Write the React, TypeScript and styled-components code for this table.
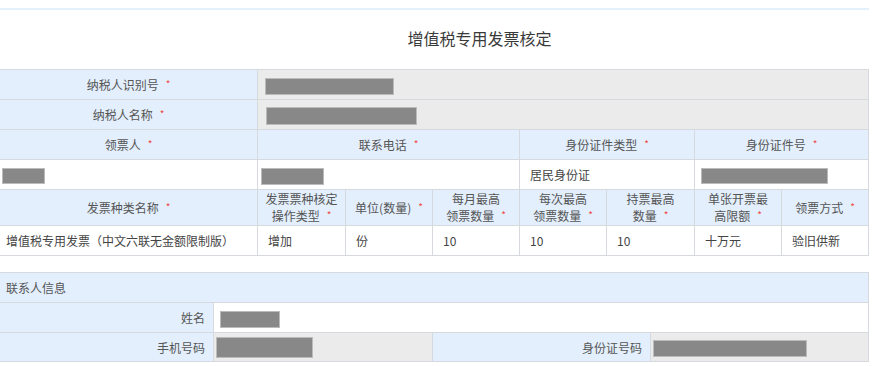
import React from "react"
import styled, { createGlobalStyle } from "styled-components"

const GlobalStyle = createGlobalStyle`
  html, body {
    margin: 0;
    padding: 0;
    background: #fff;
  }
  body {
    font-family: "Noto Sans CJK SC", "Liberation Sans", sans-serif;
    font-size: 12px;
    color: #555;
  }
`

const Page = styled.div`
  width: 875px;
  padding-top: 8px;
`

const TopLine = styled.div`
  height: 2px;
  background: #e3f1fc;
  margin-right: 6px;
`

const Title = styled.h2`
  margin: 0;
  height: 59px;
  line-height: 56px;
  text-align: center;
  font-size: 16px;
  font-weight: normal;
  color: #3a3a3a;
  padding-left: 84px;
`

const Table = styled.table<{ $gap?: number }>`
  width: 869px;
  table-layout: fixed;
  border-collapse: collapse;
  margin-top: ${p => p.$gap || 0}px;
  margin-left: -1px;
`

const Row = styled.tr<{ $h?: number }>`
  height: ${p => p.$h || 30}px;
`

const Label = styled.td<{ $align?: string }>`
  background: #e3effd;
  border: 1px solid #d6dadf;
  text-align: ${p => p.$align || "center"};
  padding: ${p => (p.$align === "right" ? "0 8px 0 6px" : "0 4px")};
  color: #555;
  line-height: 17px;
  vertical-align: middle;
`

const Cell = styled.td<{ $grey?: boolean; $pad?: number }>`
  background: ${p => (p.$grey ? "#ebebeb" : "#fff")};
  border: 1px solid #d6dadf;
  padding: 0 4px 0 ${p => (p.$pad === undefined ? 10 : p.$pad)}px;
  color: #444;
  vertical-align: middle;
  white-space: nowrap;
`

const Star = styled.span`
  color: #f04848;
  font-size: 10px;
  margin-left: 7px;
  position: relative;
  top: -2px;
`

const Redact = styled.span<{ $w: number; $h?: number }>`
  display: inline-block;
  vertical-align: middle;
  width: ${p => p.$w}px;
  height: ${p => p.$h || 15}px;
  background: #888;
  box-shadow: 0 0 0 1px #bbb;
`

const Section = styled.td`
  background: #e3effd;
  border: 1px solid #d6dadf;
  padding: 0 6px;
  color: #555;
`

const Req = ({ children }: { children: React.ReactNode }) => (
  <>
    {children}
    <Star>*</Star>
  </>
)

export default function App() {
  return (
    <Page>
      <GlobalStyle />
      <TopLine />
      <Title>增值税专用发票核定</Title>
      <Table>
        <colgroup>
          <col style={{ width: 258 }} />
          <col style={{ width: 88 }} />
          <col style={{ width: 87 }} />
          <col style={{ width: 87 }} />
          <col style={{ width: 87 }} />
          <col style={{ width: 88 }} />
          <col style={{ width: 87 }} />
          <col style={{ width: 87 }} />
        </colgroup>
        <tbody>
          <Row>
            <Label>
              <Req>纳税人识别号</Req>
            </Label>
            <Cell $grey $pad={8} colSpan={7}>
              <Redact $w={127} />
            </Cell>
          </Row>
          <Row>
            <Label>
              <Req>纳税人名称</Req>
            </Label>
            <Cell $grey $pad={9} colSpan={7}>
              <Redact $w={149} $h={16} />
            </Cell>
          </Row>
          <Row>
            <Label>
              <Req>领票人</Req>
            </Label>
            <Label colSpan={3}>
              <Req>联系电话</Req>
            </Label>
            <Label colSpan={2}>
              <Req>身份证件类型</Req>
            </Label>
            <Label colSpan={2}>
              <Req>身份证件号</Req>
            </Label>
          </Row>
          <Row>
            <Cell $pad={3}>
              <Redact $w={41} $h={14} />
            </Cell>
            <Cell $pad={4} colSpan={3}>
              <Redact $w={61} />
            </Cell>
            <Cell colSpan={2}>居民身份证</Cell>
            <Cell $pad={7} colSpan={2}>
              <Redact $w={125} $h={14} />
            </Cell>
          </Row>
          <Row $h={35}>
            <Label>
              <Req>发票种类名称</Req>
            </Label>
            <Label>
              发票票种核定
              <br />
              <Req>操作类型</Req>
            </Label>
            <Label>
              <Req>单位(数量)</Req>
            </Label>
            <Label>
              每月最高
              <br />
              <Req>领票数量</Req>
            </Label>
            <Label>
              每次最高
              <br />
              <Req>领票数量</Req>
            </Label>
            <Label>
              持票最高
              <br />
              <Req>数量</Req>
            </Label>
            <Label>
              单张开票最
              <br />
              <Req>高限额</Req>
            </Label>
            <Label>
              <Req>领票方式</Req>
            </Label>
          </Row>
          <Row>
            <Cell $pad={6}>增值税专用发票（中文六联无金额限制版）</Cell>
            <Cell>增加</Cell>
            <Cell>份</Cell>
            <Cell>10</Cell>
            <Cell>10</Cell>
            <Cell>10</Cell>
            <Cell>十万元</Cell>
            <Cell>验旧供新</Cell>
          </Row>
        </tbody>
      </Table>
      <Table $gap={16}>
        <colgroup>
          <col style={{ width: 214 }} />
          <col style={{ width: 219 }} />
          <col style={{ width: 218 }} />
          <col style={{ width: 218 }} />
        </colgroup>
        <tbody>
          <Row>
            <Section colSpan={4}>联系人信息</Section>
          </Row>
          <Row>
            <Label $align="right">姓名</Label>
            <Cell $pad={7} colSpan={3}>
              <Redact $w={58} />
            </Cell>
          </Row>
          <Row $h={29}>
            <Label $align="right">手机号码</Label>
            <Cell $grey $pad={3}>
              <Redact $w={95} $h={19} />
            </Cell>
            <Label $align="right">身份证号码</Label>
            <Cell $grey $pad={3}>
              <Redact $w={152} />
            </Cell>
          </Row>
        </tbody>
      </Table>
    </Page>
  )
}
